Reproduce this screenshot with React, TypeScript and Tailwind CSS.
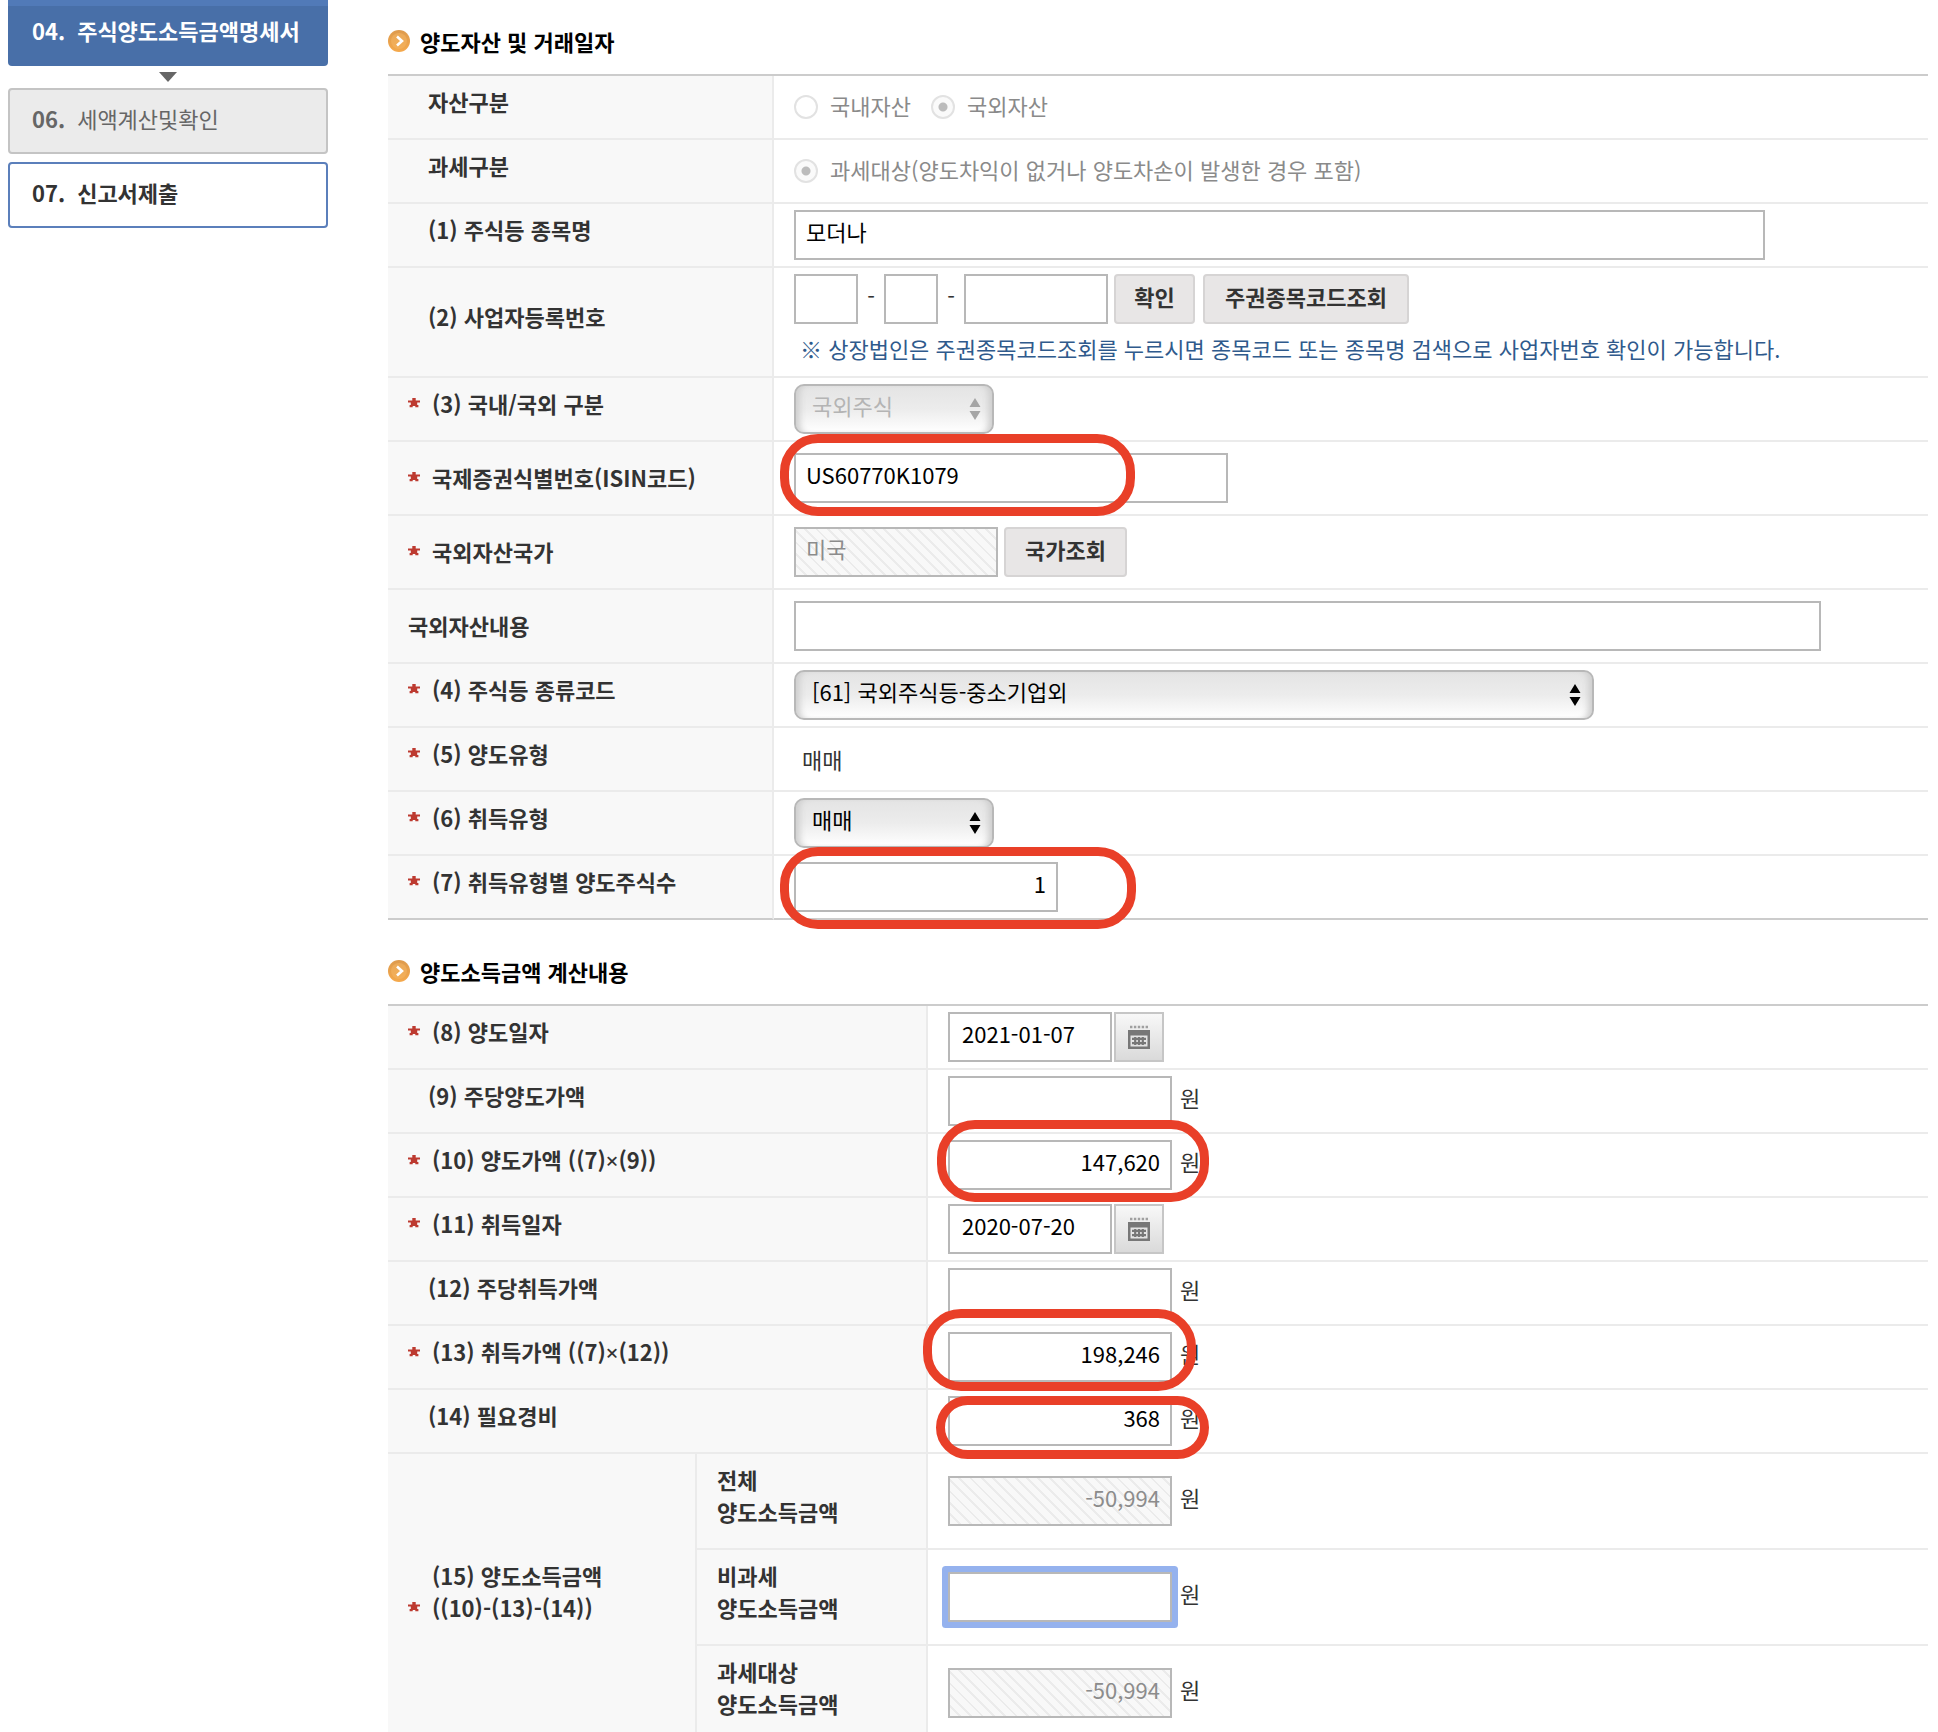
import React, { useState } from 'react';

const inputBase = 'h-[50px] border-2 border-[#b8b8b8] px-[10px] pb-2 text-[22px] leading-8 outline-none';
const editable = 'bg-white text-black';
const hatch =
  'bg-[repeating-linear-gradient(45deg,#f8f8f8_0px,#f8f8f8_6px,#ebebeb_6px,#ebebeb_8px)] text-[#8c8c8c]';

function Bullet() {
  return (
    <svg width="22" height="22" viewBox="0 0 22 22" aria-hidden="true">
      <defs>
        <linearGradient id="bullet" x1="0" y1="0" x2="0" y2="1">
          <stop offset="0" stopColor="#dd9a4c" />
          <stop offset="1" stopColor="#f5a94c" />
        </linearGradient>
      </defs>
      <circle cx="11" cy="11" r="11" fill="url(#bullet)" />
      <circle cx="11" cy="11" r="8" fill="#f6b766" opacity="0.5" />
      <path d="M9 6.5l5 4.5-5 4.5" fill="none" stroke="#fff" strokeWidth="2.6" />
    </svg>
  );
}

function Star() {
  return (
    <svg width="12" height="12" viewBox="0 0 12 12" role="img" aria-label="필수" className="shrink-0">
      <path d="M4.3 1h3.4v2.4H12v2.2H9.200V8H10.400v2.300H7.300V9H4.700v1.300H1.600V8h1.200V5.600H0V3.400h4.300z" fill="#bd3a30" />
      <path d="M3 5h6v4H3z" fill="#bd3a30" />
    </svg>
  );
}

function CalendarIcon() {
  return (
    <svg width="24" height="24" viewBox="0 0 24 24" aria-hidden="true">
      <path d="M3 2h18" stroke="#a0a0a0" strokeWidth="2.4" strokeDasharray="2.4 1.5" />
      <path d="M1 5h22v19H1z" fill="#777" />
      <path d="M3.500 10.500h17v11h-17z" fill="#e4e4e4" />
      <path d="M5 13.800h14M5 18.200h14M8.200 12v8M12 12v8M15.800 12v8" stroke="#777" strokeWidth="2.200" />
    </svg>
  );
}

function Section({ title, children }: { title: string; children: React.ReactNode }) {
  return (
    <section>
      <h2 className="flex h-9 items-center gap-[10px] pb-[6px] text-[22px] font-bold leading-8 text-black">
        <Bullet />
        {title}
      </h2>
      <table className="mt-3 w-full table-fixed border-separate border-spacing-0 border-t-2 border-[#ccc] [&>tbody>tr:last-child>*]:border-b-[#ccc]">
        {children}
      </table>
    </section>
  );
}

interface LabelProps {
  id?: string;
  required?: boolean;
  flush?: boolean;
  middle?: boolean;
  colSpan?: number;
  rowSpan?: number;
  children: React.ReactNode;
}

function LabelCell({ id, required, flush, middle, colSpan, rowSpan, children }: LabelProps) {
  return (
    <th
      scope="row"
      colSpan={colSpan}
      rowSpan={rowSpan}
      className={`border-b-2 border-r-2 border-[#ebebeb] bg-[#f8f8f8] pl-5 text-left align-middle text-[22px] font-bold leading-8 text-[#333] ${middle ? 'pb-[2px]' : 'pb-3'}`}
    >
      <label htmlFor={id} className={`flex items-end ${required ? 'gap-3' : flush ? '' : 'pl-5'}`}>
        {required && (
          <span className="flex h-8 items-center">
            <Star />
          </span>
        )}
        <span>{children}</span>
      </label>
    </th>
  );
}

function Times() {
  return <span className="font-['Noto_Sans',sans-serif] font-medium">×</span>;
}

function Cell({ h, children }: { h: string; children: React.ReactNode }) {
  return (
    <td className={`${h} border-b-2 border-[#ebebeb] pl-5 align-middle text-[22px] leading-8 text-[#333]`}>
      {children}
    </td>
  );
}

function GrayButton({ w, children }: { w: string; children: React.ReactNode }) {
  return (
    <button
      type="button"
      className={`${w} h-[50px] shrink-0 rounded-[4px] border-2 border-[#d6d4d4] bg-[#e8e6e6] pb-[6px] text-[22px] font-bold leading-8 text-[#333]`}
    >
      {children}
    </button>
  );
}

function Select({ id, w, value, disabled }: { id: string; w: string; value: string; disabled?: boolean }) {
  return (
    <div className={`${w} relative`}>
      <select
        id={id}
        disabled={disabled}
        className={`block h-[50px] w-full appearance-none rounded-[10px] border-2 border-[#b8b8b8] bg-linear-to-b from-[#e4e4e4] via-[#ececec] to-white pb-2 pl-4 text-[22px] leading-8 opacity-100 shadow-[inset_8px_0_6px_-4px_#cfcfcf,inset_-8px_0_6px_-4px_#cfcfcf] ${disabled ? 'text-[#b4b4b4]' : 'text-black'}`}
      >
        <option>{value}</option>
      </select>
      <svg
        width="12"
        height="22"
        viewBox="0 0 12 22"
        className={`pointer-events-none absolute right-[13px] top-[14px] ${disabled ? 'fill-[#a5a5a5]' : 'fill-black'}`}
      >
        <path d="M6 0l5.500 9h-11zM6 22l5.500-9h-11z" />
      </svg>
    </div>
  );
}

// 붉은 강조 표시
function Mark({ className }: { className: string }) {
  return <span className={`pointer-events-none absolute z-10 border-[9px] border-[#e93f28] ${className}`} />;
}

function Radio({ name, label, checked }: { name: string; label: string; checked?: boolean }) {
  return (
    <label className="flex items-center gap-3 text-[#8a8a8a]">
      <input
        type="radio"
        name={name}
        disabled
        defaultChecked={checked}
        className="h-6 w-6 appearance-none rounded-full border-2 border-[#e2e2e2] bg-white checked:bg-[radial-gradient(circle,#bcbcbc_0_4px,#fafafa_5px)]"
      />
      <span className="pb-1">{label}</span>
    </label>
  );
}

interface AmountProps {
  id: string;
  value?: string;
  readOnly?: boolean;
  focused?: boolean;
  mark?: string;
}

function Amount({ id, value = '', readOnly, focused, mark }: AmountProps) {
  const [amount, setAmount] = useState(value);
  return (
    <div className="relative flex items-center gap-2">
      <input
        id={id}
        value={amount}
        readOnly={readOnly}
        onChange={(e) => setAmount(e.target.value)}
        className={`${inputBase} w-56 text-right ${readOnly ? hatch : editable} ${focused ? 'rounded-[1px] ring-[6px] ring-[#95b2ee]' : ''}`}
      />
      <span className="pb-2">원</span>
      {mark && <Mark className={mark} />}
    </div>
  );
}

function DateField({ id, value }: { id: string; value: string }) {
  return (
    <div className="flex gap-[2px]">
      <input id={id} defaultValue={value} className={`${inputBase} ${editable} w-[164px] pl-3`} />
      <button
        type="button"
        aria-label="날짜 선택"
        className="flex h-[50px] w-[50px] items-center justify-center border-2 border-[#c6c6c6] bg-linear-to-b from-[#f8f8f8] to-[#dadada]"
      >
        <CalendarIcon />
      </button>
    </div>
  );
}

export default function App() {
  return (
    <div
      lang="ko"
      className="flex h-screen gap-[60px] overflow-hidden bg-white pl-2 pr-[10px] font-['Noto_Sans_CJK_KR',sans-serif]"
    >
      <nav className="w-80 shrink-0 text-[22px] leading-8">
        <a
          href="#step4"
          className="flex h-[66px] items-center gap-3 rounded-b-[4px] border-t-[6px] border-[#517ab8] bg-[#486fa8] pb-3 pl-6 font-bold text-white"
        >
          <span>04.</span>주식양도소득금액명세서
        </a>
        <div className="flex h-[22px] items-center justify-center">
          <svg width="18" height="10" viewBox="0 0 18 10" aria-hidden="true">
            <path d="M0 0h18L9 10z" fill="#666" />
          </svg>
        </div>
        <a
          href="#step6"
          className="flex h-[66px] items-center gap-3 rounded-[4px] border-2 border-[#c4c4c4] bg-[#ebebeb] pb-[6px] pl-[22px] text-[#666]"
        >
          <span className="font-bold">06.</span>세액계산및확인
        </a>
        <a
          href="#step7"
          className="mt-2 flex h-[66px] items-center gap-3 rounded-[4px] border-2 border-[#5b7fbb] bg-white pb-[6px] pl-[22px] font-bold text-[#333]"
        >
          <span>07.</span>신고서제출
        </a>
      </nav>

      <main className="flex min-w-0 flex-1 flex-col gap-9 pt-[26px]">
        <Section title="양도자산 및 거래일자">
          <colgroup>
            <col className="w-[386px]" />
            <col />
          </colgroup>
          <tbody>
            <tr>
              <LabelCell>자산구분</LabelCell>
              <Cell h="h-16">
                <div className="flex gap-5">
                  <Radio name="asset" label="국내자산" />
                  <Radio name="asset" label="국외자산" checked />
                </div>
              </Cell>
            </tr>
            <tr>
              <LabelCell>과세구분</LabelCell>
              <Cell h="h-16">
                <Radio name="tax" label="과세대상(양도차익이 없거나 양도차손이 발생한 경우 포함)" checked />
              </Cell>
            </tr>
            <tr>
              <LabelCell id="stock">(1) 주식등 종목명</LabelCell>
              <Cell h="h-16">
                <input
                  id="stock"
                  defaultValue="모더나"
                  className={`${inputBase} ${editable} block w-[971px] max-w-full`}
                />
              </Cell>
            </tr>
            <tr>
              <LabelCell id="biz1">(2) 사업자등록번호</LabelCell>
              <Cell h="h-[110px] pb-[6px]">
                <div className="flex items-center">
                  <input id="biz1" className={`${inputBase} ${editable} w-16`} />
                  <span className="w-[26px] pb-2 text-center">-</span>
                  <input aria-label="사업자등록번호 가운데 자리" className={`${inputBase} ${editable} w-[54px]`} />
                  <span className="w-[26px] pb-2 text-center">-</span>
                  <input aria-label="사업자등록번호 끝자리" className={`${inputBase} ${editable} mr-[6px] w-36`} />
                  <div className="flex gap-2">
                    <GrayButton w="w-[81px]">확인</GrayButton>
                    <GrayButton w="w-[206px]">주권종목코드조회</GrayButton>
                  </div>
                </div>
                <p className="mt-2 pl-[6px] text-[#2f5a8c]">
                  ※ 상장법인은 주권종목코드조회를 누르시면 종목코드 또는 종목명 검색으로 사업자번호 확인이 가능합니다.
                </p>
              </Cell>
            </tr>
            <tr>
              <LabelCell id="region" required>(3) 국내/국외 구분</LabelCell>
              <Cell h="h-16">
                <Select id="region" w="w-[200px]" value="국외주식" disabled />
              </Cell>
            </tr>
            <tr>
              <LabelCell id="isin" required middle>국제증권식별번호(ISIN코드)</LabelCell>
              <Cell h="h-[74px]">
                <div className="relative">
                  <input
                    id="isin"
                    defaultValue="US60770K1079"
                    className={`${inputBase} ${editable} block w-[434px]`}
                  />
                  <Mark className="-left-[14px] -top-[19px] h-[82px] w-[355px] rounded-[38px]" />
                </div>
              </Cell>
            </tr>
            <tr>
              <LabelCell id="country" required middle>국외자산국가</LabelCell>
              <Cell h="h-[74px]">
                <div className="flex gap-[6px]">
                  <input id="country" readOnly value="미국" className={`${inputBase} ${hatch} w-[204px]`} />
                  <GrayButton w="w-[123px]">국가조회</GrayButton>
                </div>
              </Cell>
            </tr>
            <tr>
              <LabelCell id="detail" flush middle>국외자산내용</LabelCell>
              <Cell h="h-[74px]">
                <input id="detail" className={`${inputBase} ${editable} block w-[1027px] max-w-full`} />
              </Cell>
            </tr>
            <tr>
              <LabelCell id="kind" required>(4) 주식등 종류코드</LabelCell>
              <Cell h="h-16">
                <Select id="kind" w="w-[800px]" value="[61] 국외주식등-중소기업외" />
              </Cell>
            </tr>
            <tr>
              <LabelCell required>(5) 양도유형</LabelCell>
              <Cell h="h-16">
                <span className="pl-2">매매</span>
              </Cell>
            </tr>
            <tr>
              <LabelCell id="acquire" required>(6) 취득유형</LabelCell>
              <Cell h="h-16">
                <Select id="acquire" w="w-[200px]" value="매매" />
              </Cell>
            </tr>
            <tr>
              <LabelCell id="shares" required>(7) 취득유형별 양도주식수</LabelCell>
              <Cell h="h-16">
                <div className="relative">
                  <input
                    id="shares"
                    defaultValue="1"
                    className={`${inputBase} ${editable} block w-[264px] text-right`}
                  />
                  <Mark className="-left-[14px] -top-[15px] h-[82px] w-[356px] rounded-[38px]" />
                </div>
              </Cell>
            </tr>
          </tbody>
        </Section>

        <Section title="양도소득금액 계산내용">
          <colgroup>
            <col className="w-[309px]" />
            <col className="w-[231px]" />
            <col />
          </colgroup>
          <tbody>
            <tr>
              <LabelCell id="sellDate" required colSpan={2}>(8) 양도일자</LabelCell>
              <Cell h="h-16">
                <DateField id="sellDate" value="2021-01-07" />
              </Cell>
            </tr>
            <tr>
              <LabelCell id="sellUnit" colSpan={2}>(9) 주당양도가액</LabelCell>
              <Cell h="h-16">
                <Amount id="sellUnit" />
              </Cell>
            </tr>
            <tr>
              <LabelCell id="sellTotal" required colSpan={2}>(10) 양도가액 ((7)<Times />(9))</LabelCell>
              <Cell h="h-16">
                <Amount id="sellTotal" value="147,620" mark="-left-[11px] -top-5 h-[82px] w-[272px] rounded-[38px]" />
              </Cell>
            </tr>
            <tr>
              <LabelCell id="buyDate" required colSpan={2}>(11) 취득일자</LabelCell>
              <Cell h="h-16">
                <DateField id="buyDate" value="2020-07-20" />
              </Cell>
            </tr>
            <tr>
              <LabelCell id="buyUnit" colSpan={2}>(12) 주당취득가액</LabelCell>
              <Cell h="h-16">
                <Amount id="buyUnit" />
              </Cell>
            </tr>
            <tr>
              <LabelCell id="buyTotal" required colSpan={2}>(13) 취득가액 ((7)<Times />(12))</LabelCell>
              <Cell h="h-16">
                <Amount id="buyTotal" value="198,246" mark="-left-[25px] -top-[23px] h-[82px] w-[273px] rounded-[38px]" />
              </Cell>
            </tr>
            <tr>
              <LabelCell id="cost" colSpan={2}>(14) 필요경비</LabelCell>
              <Cell h="h-16">
                <Amount id="cost" value="368" mark="-left-3 top-0 h-[63px] w-[273px] rounded-[32px]" />
              </Cell>
            </tr>
            <tr>
              <LabelCell required rowSpan={3}>
                (15) 양도소득금액
                <br />
                ((10)-(13)-(14))
              </LabelCell>
              <LabelCell id="gainAll" flush>
                전체
                <br />
                양도소득금액
              </LabelCell>
              <Cell h="h-24">
                <Amount id="gainAll" value="-50,994" readOnly />
              </Cell>
            </tr>
            <tr>
              <LabelCell id="gainFree" flush>
                비과세
                <br />
                양도소득금액
              </LabelCell>
              <Cell h="h-24">
                <Amount id="gainFree" focused />
              </Cell>
            </tr>
            <tr>
              <LabelCell id="gainTaxed" flush>
                과세대상
                <br />
                양도소득금액
              </LabelCell>
              <Cell h="h-24">
                <Amount id="gainTaxed" value="-50,994" readOnly />
              </Cell>
            </tr>
          </tbody>
        </Section>
      </main>
    </div>
  );
}
